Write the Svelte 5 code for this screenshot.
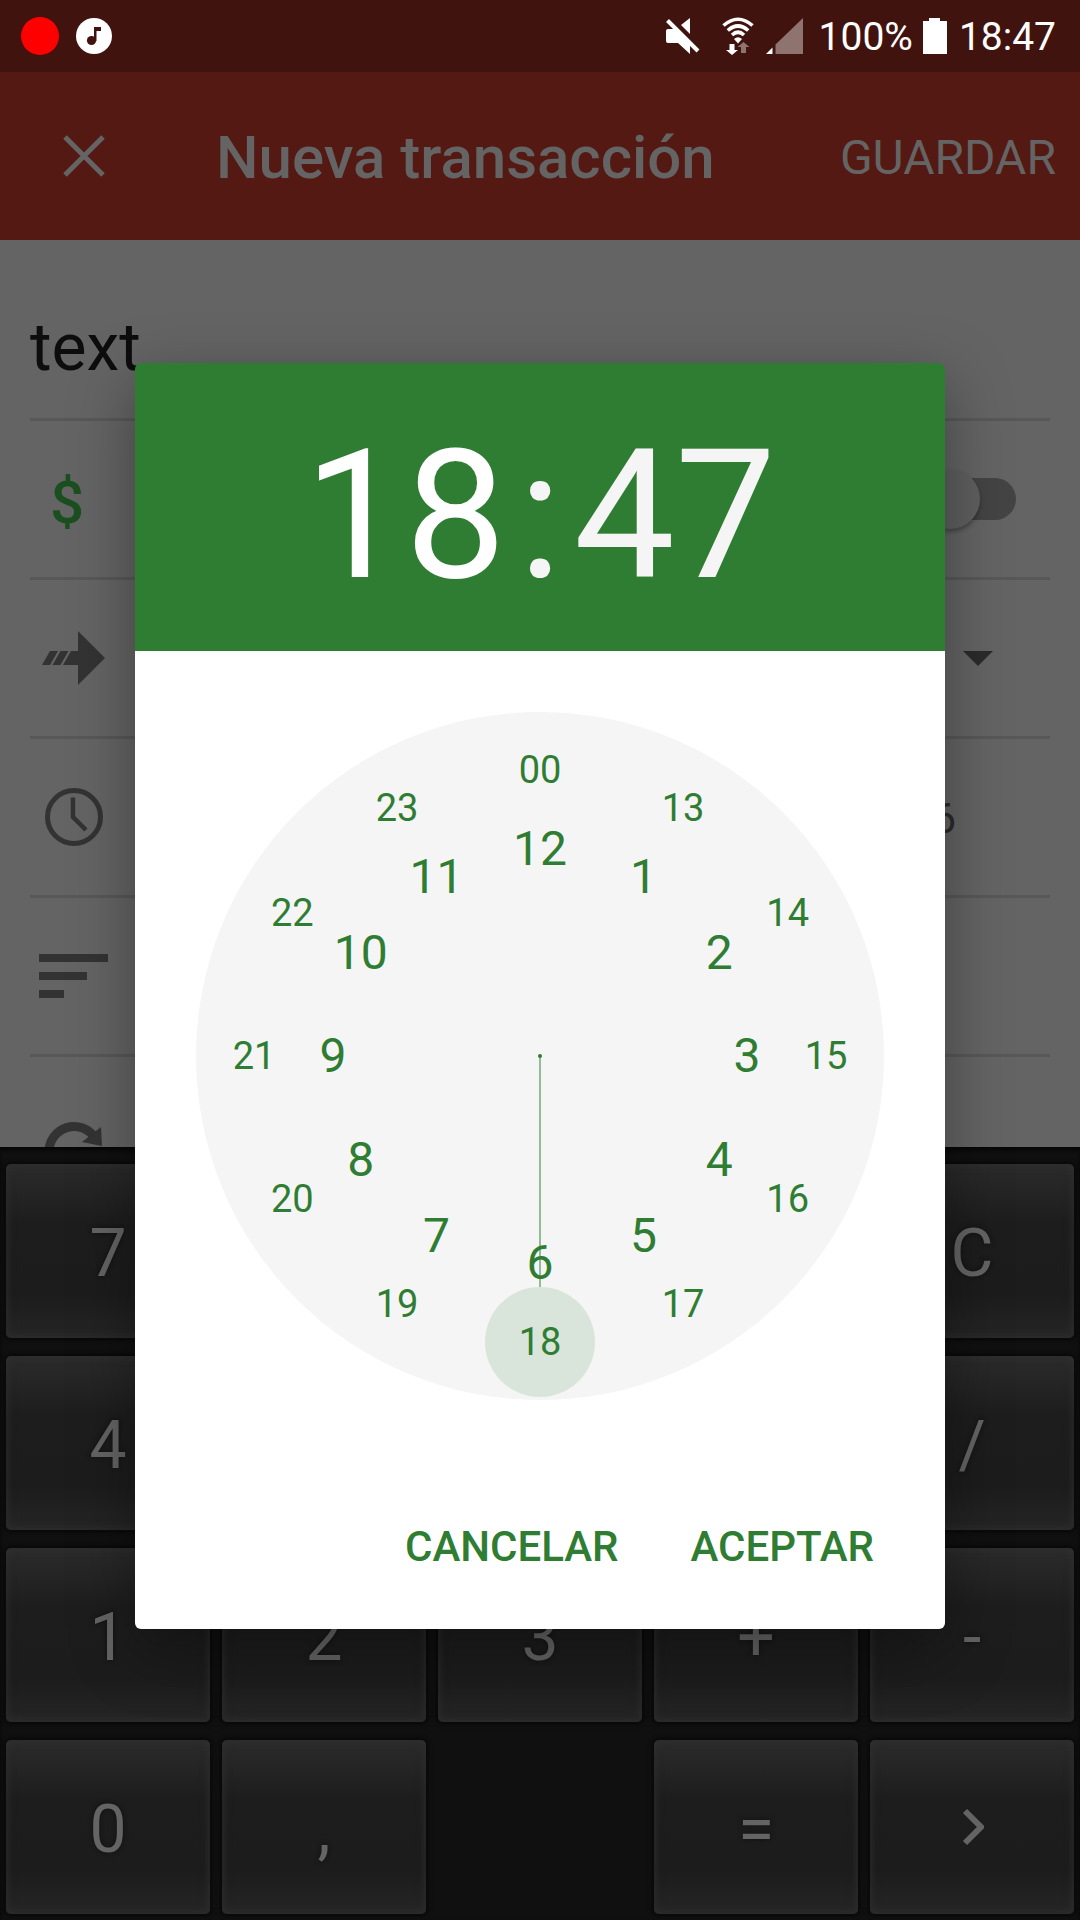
<script>
  const outer = ['00', '13', '14', '15', '16', '17', '18', '19', '20', '21', '22', '23'];
  const inner = ['12', '1', '2', '3', '4', '5', '6', '7', '8', '9', '10', '11'];
  const keys = [
    '7', '8', '9', '*', 'C',
    '4', '5', '6', '(', '/',
    '1', '2', '3', '+', '-',
    '0', ',', '', '=', 'next'
  ];
  let hour = $state('18');

  function place(index, radius) {
    const a = (index * Math.PI) / 6;
    return {
      x: 344 + radius * Math.sin(a),
      y: 344 - radius * Math.cos(a)
    };
  }

  const marks = [
    ...outer.map((label, i) => ({ label, kind: 'outer', ...place(i, 286) })),
    ...inner.map((label, i) => ({ label, kind: 'inner', ...place(i, 207) }))
  ];
  let picked = $derived(marks.find((m) => m.label === hour));
</script>

<div class="screen">
  <div class="status">
    <div class="group">
      <span class="rec"></span>
      <svg class="music" width="36" height="36" viewBox="0 0 36 36">
        <circle cx="18" cy="18" r="18" fill="#fff" />
        <circle cx="15.500" cy="22.500" r="4.600" fill="#41130e" />
        <path d="M18 9h7v4h-4.500v10H18z" fill="#41130e" />
      </svg>
    </div>
    <div class="group right">
      <svg class="mute" width="34" height="36" viewBox="0 0 34 36" fill="#fff">
        <path d="M2 11h9l13 14v11L12 25H2q-2 0-2-2V13q0-2 2-2z" />
        <path d="M24 0v16l-9-9z" />
        <path d="M1.500 2.500L32 33" stroke="#fff" stroke-width="4" />
      </svg>
      <svg class="wifi" width="32" height="38" viewBox="0 0 32 38" fill="none" stroke="#fff" stroke-width="3.600">
        <path d="M1.500 8.500Q16-4 30.500 8.500M5.800 13.500q10.200-9 20.400 0M10 18q6-5.500 12 0" />
        <path d="M12 22q4-3.500 8 0L16 26.500z" fill="#fff" stroke="none" />
        <path d="M7.500 27h5v6h3.500l-6 5-6-5h3.500z" fill="#fff" stroke="none" />
        <path d="M19 36h5v-6h3.500L21.500 25l-6 5H19z" fill="#8f736f" stroke="none" />
      </svg>
      <svg class="signal" width="37" height="36" viewBox="0 0 37 36">
        <path d="M0 36l6.500-6.500V36z" fill="#fff" />
        <path d="M9.500 26.500L37 0v36H9.500z" fill="#8f736f" />
      </svg>
      <span class="level">100%</span>
      <svg class="battery" width="24" height="36" viewBox="0 0 24 36">
        <path d="M0 3h6V0h11v3h7v33H0z" fill="#fff" />
      </svg>
      <span class="now">18:47</span>
    </div>
  </div>

  <header class="appbar">
    <button class="close" aria-label="Cerrar">
      <svg width="42" height="42" viewBox="0 0 42 42" stroke="#646464" stroke-width="5">
        <path d="M2 2l38 38M40 2L2 40" />
      </svg>
    </button>
    <h1>Nueva transacción</h1>
    <button class="save">GUARDAR</button>
  </header>

  <main class="form">
    <input class="title" type="text" value="text" aria-label="Descripción" />
    <div class="row amount">
      <span class="currency">$</span>
      <input class="switch" type="checkbox" role="switch" aria-label="Ingreso" />
    </div>
    <div class="row account">
      <svg width="66" height="56" viewBox="0 0 66 56" fill="#333">
        <path d="M36 1l27 27-27 27V35H21l8-14h7z" />
        <path d="M0 35l8-14h8L8 35zM10.500 35l8-14h8l-8 14z" />
      </svg>
      <svg class="caret" width="30" height="15" viewBox="0 0 30 15" fill="#2b2b2b">
        <path d="M0 0h30L15 15z" />
      </svg>
    </div>
    <div class="row date">
      <svg width="58" height="58" viewBox="0 0 58 58" fill="none" stroke="#333">
        <circle cx="29" cy="29" r="26.500" stroke-width="5" />
        <path d="M28 9.500V29l13 13" stroke-width="4.500" />
      </svg>
      <span class="year">2016</span>
    </div>
    <div class="row notes">
      <svg width="69" height="44" viewBox="0 0 69 44" fill="#333">
        <path d="M0 0h69v8H0zM0 18h48v8H0zM0 36h25v8H0z" />
      </svg>
    </div>
    <div class="row repeat">
      <svg width="60" height="60" viewBox="0 0 60 60">
        <path d="M5 30a25 25 0 0 1 46-14" fill="none" stroke="#333" stroke-width="9" />
        <path d="M57 5l1 19-20-4z" fill="#333" />
        <path d="M5 30a25 25 0 0 0 50 0" fill="none" stroke="#333" stroke-width="9" />
      </svg>
    </div>
  </main>

  <div class="keypad">
    {#each keys as key}
      {#if key === ''}
        <span></span>
      {:else if key === 'next'}
        <button class="key" aria-label="Siguiente">
          <svg width="22" height="38" viewBox="0 0 22 38" fill="none" stroke="#646464" stroke-width="6">
            <path d="M3 3l16 16L3 35" />
          </svg>
        </button>
      {:else}
        <button class="key">{key}</button>
      {/if}
    {/each}
  </div>

  <div class="overlay">
    <div class="dialog" role="dialog" aria-modal="true" aria-label="Elegir hora">
      <div class="time">
        <button class="part on">{hour}</button>
        <span class="colon">:</span>
        <button class="part">47</button>
      </div>
      <div class="body">
        <svg class="clock" viewBox="0 0 688 688">
          <circle cx="344" cy="344" r="344" fill="#f5f5f5" />
          <line x1="344" y1="344" x2={picked.x} y2={picked.y} stroke="#93bb96" stroke-width="2" />
          <circle cx="344" cy="344" r="2" fill="#2f7d32" />
          <circle cx={picked.x} cy={picked.y} r="55" fill="#d9e5da" />
          {#each marks as mark}
            <text class={mark.kind} x={mark.x} y={mark.y} dy="0.34em">{mark.label}</text>
          {/each}
        </svg>
      </div>
      <div class="actions">
        <button>CANCELAR</button>
        <button>ACEPTAR</button>
      </div>
    </div>
  </div>
</div>

<style>
  :global(body) {
    background: #101010;
  }
  .screen {
    position: relative;
    display: flex;
    flex-direction: column;
    height: 100vh;
    overflow: hidden;
    font-family: Roboto, sans-serif;
    background: #646464;
  }
  button {
    margin: 0;
    padding: 0;
    border: 0;
    background: none;
    color: inherit;
    font: inherit;
    cursor: pointer;
  }
  svg {
    display: block;
    flex: none;
  }
  .status {
    flex: none;
    display: flex;
    justify-content: space-between;
    align-items: center;
    height: 72px;
    padding: 0 24px 0 21px;
    box-sizing: border-box;
    background: #41130e;
    color: #fff;
    font-size: 39px;
    line-height: 48px;
  }
  .group {
    display: flex;
    align-items: center;
    gap: 17px;
  }
  .right {
    gap: 12px;
  }
  .rec {
    width: 38px;
    height: 38px;
    border-radius: 50%;
    background: #f00;
  }
  .mute {
    margin-right: 10px;
  }
  .level,
  .now {
    padding-top: 2px;
  }
  .level {
    margin: 0 -2px 0 4px;
  }
  .appbar {
    flex: none;
    display: flex;
    align-items: center;
    height: 168px;
    padding: 0 24px 0 42px;
    box-sizing: border-box;
    background: #531912;
    color: #646464;
  }
  .close {
    display: grid;
    place-items: center;
    width: 84px;
    height: 84px;
  }
  h1 {
    flex: 1;
    margin: 0 0 0 90px;
    padding-top: 4px;
    font-size: 60px;
    line-height: 72px;
    font-weight: 500;
  }
  .save {
    padding-top: 4px;
    font-size: 48px;
    line-height: 60px;
  }
  .form {
    flex: 1;
    min-height: 0;
    overflow: hidden;
    padding: 0 30px;
    color: #2b2b2b;
  }
  .title {
    display: block;
    width: 100%;
    height: 181px;
    margin: 0;
    padding: 36px 0 0;
    box-sizing: border-box;
    border: 0;
    border-bottom: 3px solid #585858;
    outline: 0;
    background: none;
    color: #0d0d0d;
    font-family: inherit;
    font-size: 66px;
  }
  .row {
    display: flex;
    align-items: center;
    justify-content: space-between;
    height: 159px;
    padding: 0 34px 0 12px;
    box-sizing: border-box;
    border-bottom: 3px solid #585858;
    font-size: 42px;
  }
  .amount {
    padding-left: 20px;
  }
  .account {
    padding-right: 57px;
  }
  .date {
    padding: 0 94px 0 15px;
  }
  .year {
    padding-top: 2px;
  }
  .notes {
    padding-left: 9px;
  }
  .repeat {
    height: 192px;
    padding-left: 14px;
  }
  .currency {
    padding-top: 6px;
    color: #1c4f1f;
    font-size: 60px;
    font-weight: 500;
  }
  .switch {
    appearance: none;
    display: flex;
    align-items: center;
    width: 96px;
    height: 42px;
    margin: 0;
    border-radius: 21px;
    background: #444;
  }
  .switch::before {
    content: '';
    flex: none;
    width: 60px;
    height: 60px;
    border-radius: 50%;
    background: #5f5f5f;
    box-shadow: 0 3px 4px rgba(0, 0, 0, 0.3);
  }
  .keypad {
    flex: none;
    display: grid;
    grid-template-columns: repeat(5, 1fr);
    grid-auto-rows: 174px;
    gap: 18px 12px;
    padding: 17px 6px 6px;
    background: #101010;
    box-shadow: inset 0 3px 4px #060606;
  }
  .key {
    display: grid;
    place-items: center;
    padding-top: 6px;
    border-radius: 5px;
    background: linear-gradient(#2b2b2b, #1d1d1d 34%, #1c1c1c 75%, #252525);
    box-shadow: 0 0 4px 2px #080808, inset 0 0 10px #303030;
    color: #646464;
    font-size: 66px;
    line-height: 78px;
    text-shadow: 0 0 5px #111;
  }
  .key svg {
    margin: 0 0 6px 2px;
  }
  .overlay {
    position: absolute;
    inset: 72px 0 0;
    display: flex;
    align-items: center;
    justify-content: center;
  }
  .dialog {
    width: 75%;
    border-radius: 6px;
    color: #2f7d32;
    box-shadow: 0 20px 64px rgba(0, 0, 0, 0.36);
  }
  .time {
    display: flex;
    align-items: center;
    justify-content: center;
    gap: 12px;
    height: 288px;
    padding-top: 18px;
    box-sizing: border-box;
    border-radius: 6px 6px 0 0;
    background: #2f7d32;
    color: #f5f5f5;
    font-size: 180px;
    line-height: 210px;
  }
  .on {
    color: #fff;
  }
  .body {
    padding: 61px 61px 0;
    background: #fff;
  }
  .clock {
    width: 100%;
  }
  text {
    fill: #2f7d32;
    text-anchor: middle;
  }
  .outer {
    font-size: 38px;
  }
  .inner {
    font-size: 48px;
  }
  .actions {
    display: flex;
    justify-content: flex-end;
    gap: 24px;
    padding: 92px 47px 28px 0;
    border-radius: 0 0 6px 6px;
    background: #fff;
  }
  .actions button {
    padding: 0 24px;
    font-size: 42px;
    line-height: 109px;
    font-weight: 500;
  }
</style>
